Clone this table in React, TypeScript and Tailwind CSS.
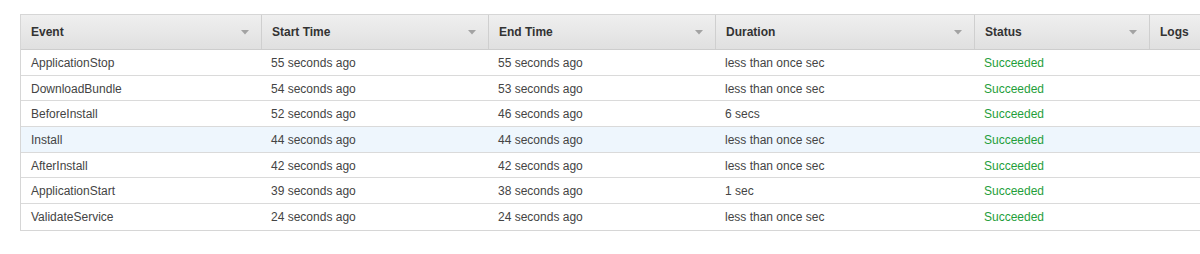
const rows = [
  { event: "ApplicationStop", start: "55 seconds ago", end: "55 seconds ago", duration: "less than once sec" },
  { event: "DownloadBundle", start: "54 seconds ago", end: "53 seconds ago", duration: "less than once sec" },
  { event: "BeforeInstall", start: "52 seconds ago", end: "46 seconds ago", duration: "6 secs" },
  { event: "Install", start: "44 seconds ago", end: "44 seconds ago", duration: "less than once sec", active: true },
  { event: "AfterInstall", start: "42 seconds ago", end: "42 seconds ago", duration: "less than once sec" },
  { event: "ApplicationStart", start: "39 seconds ago", end: "38 seconds ago", duration: "1 sec" },
  { event: "ValidateService", start: "24 seconds ago", end: "24 seconds ago", duration: "less than once sec" },
];

const cols = "grid grid-cols-[241px_227px_227px_259px_175px_1fr]";

const Arrow = () => (
  <svg width="8" height="5" viewBox="0 0 8 5" className="shrink-0">
    <path d="M0 0 L8 0 L4 4.5 Z" fill="#a3a3a3" />
  </svg>
);

const HeadCell: React.FC<{ label: string; sort?: boolean; last?: boolean }> = ({ label, sort = true, last }) => (
  <div className={`flex items-center justify-between pl-[10px] pr-[12px] ${last ? "" : "border-r border-[#cfcfcf]"}`}>
    <span className="font-bold text-[12px] text-[#333]">{label}</span>
    {sort && <Arrow />}
  </div>
);

export default function App() {
  return (
    <div className="w-[1200px] h-[254px] bg-white overflow-hidden pl-[20px] pt-[14px] font-['Liberation_Sans',Arial,sans-serif]">
      <div className="w-[1210px] border border-[#d6d6d6] border-r-0">
        <div className={`${cols} h-[35px] bg-gradient-to-b from-[#efefef] to-[#e0e0e0] border-b border-[#cdcdcd]`}>
          <HeadCell label="Event" />
          <HeadCell label="Start Time" />
          <HeadCell label="End Time" />
          <HeadCell label="Duration" />
          <HeadCell label="Status" />
          <HeadCell label="Logs" sort={false} last />
        </div>
        {rows.map((r, i) => (
          <div
            key={r.event}
            className={`${cols} h-[25.7px] pt-[1px] items-center text-[12px] text-[#444] ${i < rows.length - 1 ? "border-b border-[#dadada]" : ""} ${r.active ? "bg-[#eef6fd]" : "bg-white"}`}
          >
            <div className="pl-[10px]">{r.event}</div>
            <div className="pl-[9px]">{r.start}</div>
            <div className="pl-[9px]">{r.end}</div>
            <div className="pl-[9px]">{r.duration}</div>
            <div className="pl-[9px] text-[#1f9e3b]">Succeeded</div>
            <div />
          </div>
        ))}
      </div>
    </div>
  );
}
